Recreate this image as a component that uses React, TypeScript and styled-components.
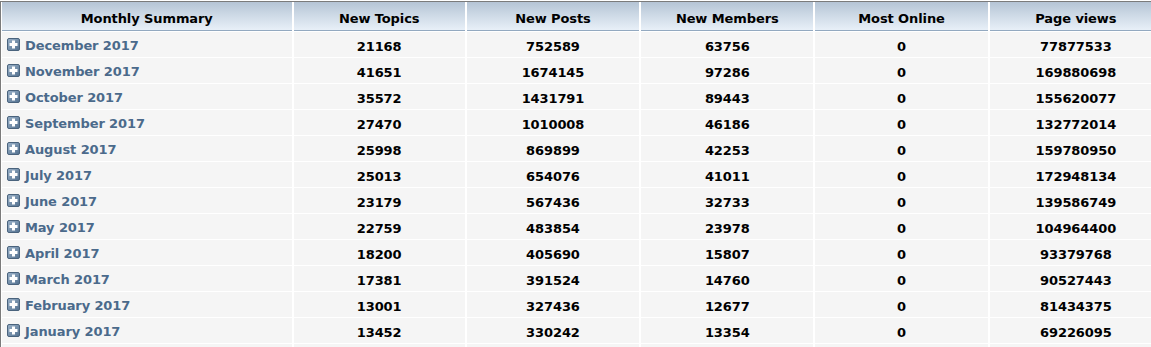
import React from 'react'
import styled, { createGlobalStyle } from 'styled-components'

const GlobalStyle = createGlobalStyle`
  html, body {
    margin: 0;
    padding: 0;
    background: #ffffff;
    overflow: hidden;
  }
  body {
    padding-top: 1px;
    font-family: "DejaVu Sans", Verdana, sans-serif;
  }
`

const Frame = styled.div`
  width: 1151px;
  height: 346px;
  overflow: hidden;
  border-top: 1px solid #7b7b7b;
  border-left: 1px solid #7b7b7b;
  box-sizing: border-box;
`

const Table = styled.table`
  table-layout: fixed;
  border-collapse: separate;
  border-spacing: 2px 1px;
  margin: -1px 0 0 -1px;
  width: 1164px;
  font-size: 13px;
  font-weight: bold;
  letter-spacing: -0.1px;
`

const HeadCell = styled.th<{ $w: number }>`
  width: ${p => p.$w}px;
  height: 24px;
  padding: 4px 0 0;
  color: #000000;
  text-align: center;
  vertical-align: middle;
  background: linear-gradient(to bottom, #b5c4d5 0%, #cfdbe7 50%, #e8f0f8 100%);
  border-bottom: 1px solid #93a9c0;
`

const Cell = styled.td`
  height: 22px;
  padding: 3px 0 0;
  background: #f5f5f5;
  color: #000000;
  text-align: center;
  vertical-align: middle;
`

const MonthCell = styled(Cell)`
  text-align: left;
  padding-left: 5px;
`

const MonthLink = styled.a`
  display: inline-flex;
  align-items: center;
  gap: 5px;
  color: #4b6a8b;
  text-decoration: none;
  cursor: pointer;
`

const Expand = styled.span`
  display: inline-block;
  width: 13px;
  height: 13px;
  margin-top: -3px;
  line-height: 0;
`

const PlusIcon = () => (
  <Expand>
    <svg width='13' height='13' viewBox='0 0 13 13'>
      <defs>
        <linearGradient id='pg' x1='0' y1='0' x2='1' y2='1'>
          <stop offset='0' stopColor='#9bb2c9' />
          <stop offset='1' stopColor='#52708f' />
        </linearGradient>
      </defs>
      <rect x='0.5' y='0.5' width='12' height='12' rx='1.5' fill='url(#pg)' stroke='#4a637d' />
      <rect x='5' y='2.5' width='3' height='8' fill='#ffffff' />
      <rect x='2.5' y='5' width='8' height='3' fill='#ffffff' />
    </svg>
  </Expand>
)

const columns = [
  { title: 'Monthly Summary', w: 289 },
  { title: 'New Topics', w: 171 },
  { title: 'New Posts', w: 172 },
  { title: 'New Members', w: 172 },
  { title: 'Most Online', w: 172 },
  { title: 'Page views', w: 172 }
]

const rows: Array<[string, number, number, number, number, number]> = [
  ['December 2017', 21168, 752589, 63756, 0, 77877533],
  ['November 2017', 41651, 1674145, 97286, 0, 169880698],
  ['October 2017', 35572, 1431791, 89443, 0, 155620077],
  ['September 2017', 27470, 1010008, 46186, 0, 132772014],
  ['August 2017', 25998, 869899, 42253, 0, 159780950],
  ['July 2017', 25013, 654076, 41011, 0, 172948134],
  ['June 2017', 23179, 567436, 32733, 0, 139586749],
  ['May 2017', 22759, 483854, 23978, 0, 104964400],
  ['April 2017', 18200, 405690, 15807, 0, 93379768],
  ['March 2017', 17381, 391524, 14760, 0, 90527443],
  ['February 2017', 13001, 327436, 12677, 0, 81434375],
  ['January 2017', 13452, 330242, 13354, 0, 69226095]
]

const App = () => {
  return (
    <>
      <GlobalStyle />
      <Frame>
        <Table>
          <thead>
            <tr>
              {columns.map(col => (
                <HeadCell key={col.title} $w={col.w}>
                  {col.title}
                </HeadCell>
              ))}
            </tr>
          </thead>
          <tbody>
            {rows.map(([month, topics, posts, members, online, views]) => (
              <tr key={month}>
                <MonthCell>
                  <MonthLink>
                    <PlusIcon />
                    {month}
                  </MonthLink>
                </MonthCell>
                <Cell>{topics}</Cell>
                <Cell>{posts}</Cell>
                <Cell>{members}</Cell>
                <Cell>{online}</Cell>
                <Cell>{views}</Cell>
              </tr>
            ))}
            <tr>
              <MonthCell />
              <Cell />
              <Cell />
              <Cell />
              <Cell />
              <Cell />
            </tr>
          </tbody>
        </Table>
      </Frame>
    </>
  )
}

export default App
